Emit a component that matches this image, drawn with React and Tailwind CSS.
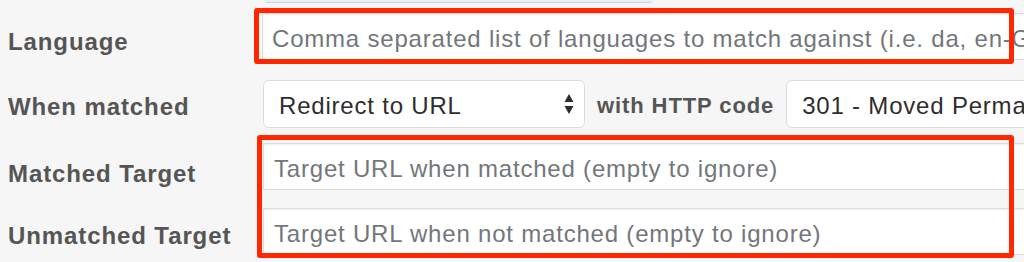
import React from "react";

const SelectBox = ({ value, width, arrows }) => {
  return (
    <div
      className={`relative flex items-center shrink-0 h-[48px] ${width} bg-white border border-[#dcdcdc] rounded-[6px] pl-[15px] pt-[3px] text-[24px] tracking-[0.8px] text-[#2e2e2e]`}
    >
      <span className="whitespace-nowrap">{value}</span>
      {arrows && (
        <svg
          className="absolute right-[10px] top-[12px]"
          width="10"
          height="22"
          viewBox="0 0 10 22"
        >
          <path d="M5 1 L9.5 9 L0.5 9 Z" fill="#2e2e2e" />
          <path d="M0.5 13 L9.5 13 L5 21 Z" fill="#2e2e2e" />
        </svg>
      )}
    </div>
  );
};

const TextInput = ({ placeholder, padLeft }) => {
  return (
    <input
      readOnly
      placeholder={placeholder}
      className={`shrink-0 h-[47px] w-[800px] bg-white border border-[#dcdcdc] shadow-[inset_0_1px_2px_rgba(0,0,0,0.07)] ${padLeft} pt-[5px] text-[24px] tracking-[0.8px] text-[#333] placeholder:text-[#73777b] outline-none`}
    />
  );
};

const Label = ({ children, pad }) => {
  return (
    <div
      className={`w-[262px] shrink-0 pl-[8px] ${pad} text-[24px] leading-[28px] font-bold tracking-[0.9px] text-[#555]`}
    >
      {children}
    </div>
  );
};

export default function App() {
  return (
    <div className="relative w-[1024px] h-[262px] overflow-hidden bg-[#f6f6f6] font-['Liberation_Sans',Arial,sans-serif]">
      <div className="ml-[265px] w-[388px] h-[3px] bg-[#e9f1f8] border-b border-[#c8d5e1] rounded-b-[3px]" />

      <div className="flex mt-[10px]">
        <Label pad="pt-[15px]">Language</Label>
        <TextInput
          padLeft="pl-[9px]"
          placeholder="Comma separated list of languages to match against (i.e. da, en-GB)"
        />
      </div>

      <div className="flex items-start mt-[20px]">
        <Label pad="pt-[13px]">When matched</Label>
        <div className="flex items-center gap-[12px] ml-[1px]">
          <SelectBox value="Redirect to URL" width="w-[322px]" arrows />
          <span className="text-[22px] font-bold tracking-[0.9px] text-[#555] pt-[2px] whitespace-nowrap">
            with HTTP code
          </span>
          <SelectBox value="301 - Moved Permanently" width="w-[300px]" />
        </div>
      </div>

      <div className="flex mt-[15px]">
        <Label pad="pt-[17px]">Matched Target</Label>
        <div className="ml-[1px]">
          <TextInput
            padLeft="pl-[10px]"
            placeholder="Target URL when matched (empty to ignore)"
          />
        </div>
      </div>

      <div className="flex mt-[18px]">
        <Label pad="pt-[14px]">Unmatched Target</Label>
        <div className="ml-[1px]">
          <TextInput
            padLeft="pl-[10px]"
            placeholder="Target URL when not matched (empty to ignore)"
          />
        </div>
      </div>

      {/* annotation boxes drawn over the form */}
      <div className="absolute left-[254px] top-[8px] w-[760px] h-[56px] border-[5px] border-[#ff2600] rounded-[3px] pointer-events-none" />
      <div className="absolute left-[257px] top-[135px] w-[757px] h-[123px] border-[5px] border-[#ff2600] rounded-[3px] pointer-events-none" />
    </div>
  );
}
